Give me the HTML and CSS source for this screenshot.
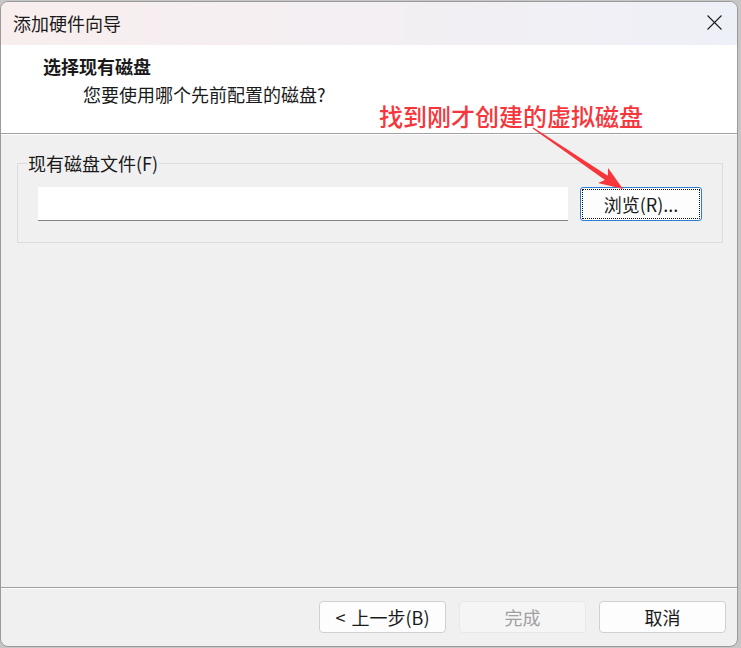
FILE: index.html
```html
<!DOCTYPE html>
<html lang="zh-CN">
<head>
  <meta charset="UTF-8">
  <title>添加硬件向导</title>
  <link rel="stylesheet" href="styles.css">
</head>
<body>
  <div class="window">
    <div class="titlebar">
      <span class="title">添加硬件向导</span>
      <span class="close">
        <svg width="15" height="15" viewBox="0 0 15 15"><path d="M0.5 0.5L14.5 14.5M14.5 0.5L0.5 14.5" stroke="#1b1b1b" stroke-width="1.1"/></svg>
      </span>
    </div>

    <div class="header">
      <h1>选择现有磁盘</h1>
      <p>您要使用哪个先前配置的磁盘?</p>
    </div>

    <div class="content">
      <fieldset class="group">
        <legend>现有磁盘文件(F)</legend>
        <div class="file-row">
          <input type="text" class="path">
          <button class="browse"><span class="focus">浏览(R)...</span></button>
        </div>
      </fieldset>
    </div>

    <div class="footer">
      <button class="btn"><span class="lt">&lt;</span>上一步(B)</button>
      <button class="btn" disabled>完成</button>
      <button class="btn">取消</button>
    </div>

    <!-- red note + arrow pointing at the browse button -->
    <div class="callout">找到刚才创建的虚拟磁盘</div>
    <svg class="arrow" width="738" height="646" viewBox="0 1 738 646">
      <polygon fill="#f7363c" points="532.6,128.6 605.0,179.9 598.0,183.0 623,189 608.1,168.0 607.8,175.7 533.4,127.4"/>
    </svg>
  </div>
</body>
</html>
```

FILE: styles.css
```css
body {
  margin: 0;
  background: #c6c6c6;
  font-family: "Noto Sans CJK SC", sans-serif;
  font-size: 18px;
  color: #1a1a1a;
  overflow: hidden;
}
.window {
  position: relative;
  box-sizing: border-box;
  width: 738px;
  height: 646px;
  margin-top: 1px;
  border: 1px solid #9a9a9a;
  border-radius: 8px;
  overflow: hidden;
  display: flex;
  flex-direction: column;
  background: #f0f0f0;
}
.titlebar {
  height: 43px;
  flex: none;
  display: flex;
  align-items: center;
  justify-content: space-between;
  padding: 0 0 2px 12px;
  box-sizing: border-box;
  background: linear-gradient(90deg, #f8eeee, #eef0f7);
}
.title {
  line-height: 24px;
}
.close {
  display: flex;
  margin-right: 15px;
}
.header {
  height: 89px;
  flex: none;
  box-sizing: border-box;
  background: #fff;
  border-bottom: 1px solid #a0a0a0;
  padding: 8px 0 0 42px;
}
.header h1 {
  margin: 0;
  font-size: 18px;
  font-weight: 700;
  line-height: 27px;
}
.header p {
  margin: 0 0 0 40px;
  line-height: 28px;
}
.content {
  flex: 1;
  border-top: 1px solid #fff;
  padding: 18px 14px 0 16px;
}
.group {
  margin: 0;
  min-inline-size: 0;
  border: 1px solid #dcdcdc;
  padding: 14px 20px 21px 9px;
}
.group legend {
  padding: 0 1px;
  line-height: 20px;
}
.file-row {
  display: flex;
  gap: 12px;
  margin-left: 11px;
}
.path {
  flex: 1;
  height: 34px;
  box-sizing: border-box;
  border: 0;
  border-bottom: 1px solid #838383;
  background: #fff;
  outline: none;
}
.browse {
  width: 122px;
  height: 34px;
  padding: 1px;
  font: inherit;
  color: #1a1a1a;
  background: #fdfdfd;
  border: 1px solid #2b7cd3;
  border-radius: 3px;
}
.focus {
  display: flex;
  align-items: center;
  justify-content: center;
  height: 100%;
  box-sizing: border-box;
  border: 1px dotted #111;
}
.footer {
  height: 59px;
  flex: none;
  box-sizing: border-box;
  border-top: 1px solid #a0a0a0;
  box-shadow: inset 0 1px #fff;
  display: flex;
  justify-content: flex-end;
  align-items: flex-start;
  gap: 13px;
  padding: 13px 11px 0 0;
}
.btn {
  width: 127px;
  height: 32px;
  font: inherit;
  color: #1a1a1a;
  background: #fdfdfd;
  border: 1px solid #d0d0d0;
  border-radius: 4px;
}
.btn .lt {
  margin-right: 6px;
}
.btn:disabled {
  color: #a0a0a0;
  background: #f5f5f5;
  border-color: #e8e8e8;
}
.callout {
  position: absolute;
  left: 378px;
  top: 99px;
  font-size: 24px;
  font-weight: 500;
  line-height: 30px;
  color: #f7363c;
}
.arrow {
  position: absolute;
  left: -1px;
  top: -1px;
  pointer-events: none;
}
```
